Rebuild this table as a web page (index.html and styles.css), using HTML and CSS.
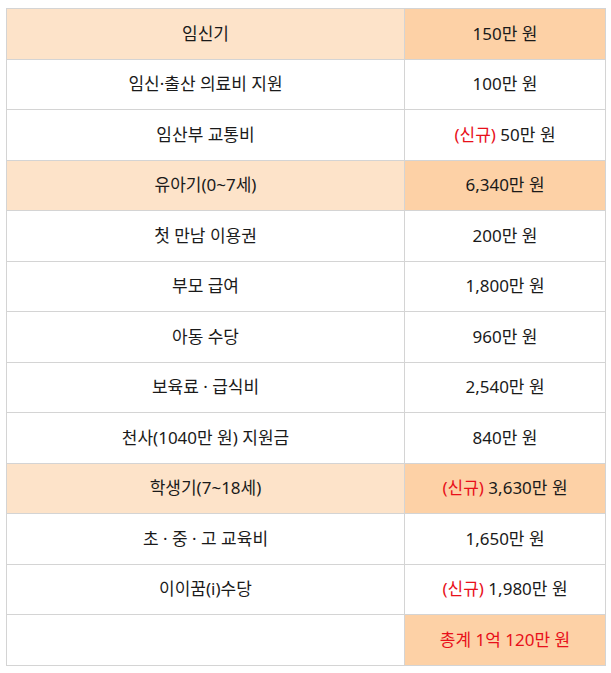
FILE: index.html
```html
<!DOCTYPE html>
<html lang="ko">
<head>
<meta charset="utf-8">
<link rel="stylesheet" href="styles.css">
</head>
<body>
<table class="support">
  <tr class="stage">
    <td class="name">임신기</td>
    <td class="amount">150만 원</td>
  </tr>
  <tr>
    <td class="name">임신·출산 의료비 지원</td>
    <td class="amount">100만 원</td>
  </tr>
  <tr>
    <td class="name">임산부 교통비</td>
    <td class="amount"><span class="new">(신규)</span> 50만 원</td>
  </tr>
  <tr class="stage">
    <td class="name">유아기(0~7세)</td>
    <td class="amount">6,340만 원</td>
  </tr>
  <tr>
    <td class="name">첫 만남 이용권</td>
    <td class="amount">200만 원</td>
  </tr>
  <tr>
    <td class="name">부모 급여</td>
    <td class="amount">1,800만 원</td>
  </tr>
  <tr>
    <td class="name">아동 수당</td>
    <td class="amount">960만 원</td>
  </tr>
  <tr>
    <td class="name">보육료 · 급식비</td>
    <td class="amount">2,540만 원</td>
  </tr>
  <tr>
    <td class="name">천사(1040만 원) 지원금</td>
    <td class="amount">840만 원</td>
  </tr>
  <tr class="stage">
    <td class="name">학생기(7~18세)</td>
    <td class="amount"><span class="new">(신규)</span> 3,630만 원</td>
  </tr>
  <tr>
    <td class="name">초 · 중 · 고 교육비</td>
    <td class="amount">1,650만 원</td>
  </tr>
  <tr>
    <td class="name">이이꿈(i)수당</td>
    <td class="amount"><span class="new">(신규)</span> 1,980만 원</td>
  </tr>
  <tr class="total">
    <td class="name"></td>
    <td class="amount"><span class="new">총계 1억 120만 원</span></td>
  </tr>
</table>
</body>
</html>
```

FILE: styles.css
```css
html, body {
  background: #ffffff;
}
body {
  margin: 8px 0 0 6px;
  font-family: "Noto Sans", "Noto Sans CJK KR", sans-serif;
  font-size: 17px;
  color: #1a1a1a;
}
.support {
  border-collapse: collapse;
  width: 599px;
  table-layout: fixed;
}
.support td {
  border: 1px solid #d4d4d4;
  height: 49.5px;
  padding: 0;
  text-align: center;
  vertical-align: middle;
  line-height: 20px;
}
.support .name {
  width: 397px;
}
.support .amount {
  width: 200px;
}
.stage .name {
  background: #fde3c9;
}
.stage .amount,
.total .amount {
  background: #fdd1a6;
}
.new {
  color: #e8101a;
}
```
